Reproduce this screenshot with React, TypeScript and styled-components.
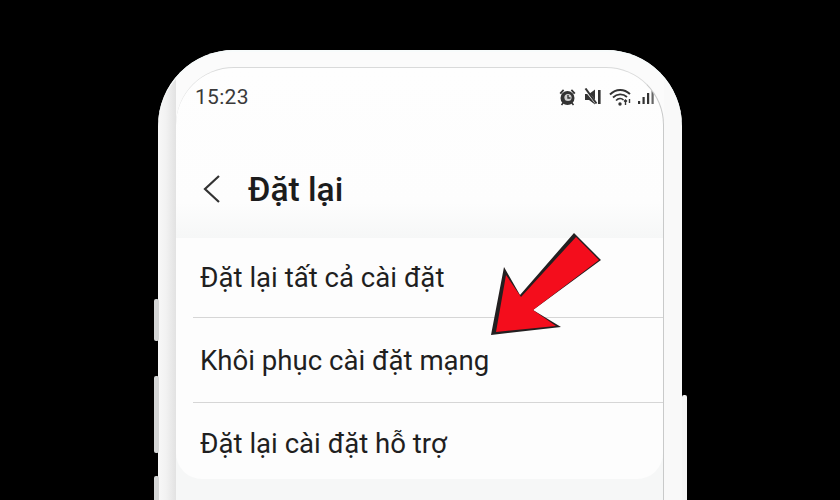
import styled, { createGlobalStyle } from 'styled-components';

const GlobalStyle = createGlobalStyle`
  html, body {
    margin: 0;
    padding: 0;
    background: #000;
    overflow: hidden;
  }
`;

const Page = styled.div`
  position: relative;
  width: 840px;
  height: 500px;
  padding: 50px 158px 0;
  box-sizing: border-box;
  background: #000;
  overflow: hidden;
  font-family: Roboto, "Noto Sans", sans-serif;
`;

const Phone = styled.div`
  position: relative;
  height: 520px;
  padding: 17px 18px 0;
  box-sizing: border-box;
  border-radius: 76px 76px 0 0;
  background: linear-gradient(90deg, #f8f8f8 0, #f2f2f2 8px, #e2e2e2 18px, #fbfbfb 18px, #fbfbfb 506px, #f9f9f9 506px);
  box-shadow: inset 0 2px 0 #f7fbfb;
`;

const SideKey = styled.div<{ $side: 'left' | 'right'; $top: number; $height: number }>`
  position: absolute;
  ${(p) => (p.$side === 'left' ? 'left: -4px;' : 'right: -5px;')}
  top: ${(p) => p.$top}px;
  width: 5px;
  height: ${(p) => p.$height}px;
  border-radius: 2px;
  background: ${(p) => (p.$side === 'left' ? '#d5d6d6' : '#f6f6f6')};
`;

const Screen = styled.div`
  height: 500px;
  border-radius: 58px 58px 0 0;
  border-top: 1px solid #d9dada;
  border-right: 1px solid #c9caca;
  box-sizing: border-box;
  overflow: hidden;
  background: linear-gradient(180deg, #fefefe 0, #fdfdfd 135px, #f6f7f7 170px);
`;

const StatusBar = styled.div`
  display: flex;
  align-items: center;
  justify-content: space-between;
  height: 26px;
  padding: 16px 9px 0 19px;
`;

const Clock = styled.span`
  font-size: 21px;
  letter-spacing: 0.3px;
  color: #3a3a3a;
`;

const StatusIcons = styled.div`
  display: flex;
  align-items: center;
`;

const Header = styled.div`
  display: flex;
  align-items: center;
  gap: 27px;
  height: 95px;
  padding: 63px 0 0 26px;
  box-sizing: border-box;
`;

const Title = styled.h1`
  margin: 0;
  font-size: 33.6px;
  font-weight: 500;
  color: #1c1c1c;
`;

const List = styled.div`
  margin-top: 33px;
  padding: 0 0 0 17px;
  height: 241px;
  background: #fdfdfd;
  border-radius: 0 0 26px 26px;
`;

const Row = styled.div<{ $height: number; $last?: boolean }>`
  display: flex;
  align-items: center;
  height: ${(p) => p.$height}px;
  font-size: 27.6px;
  color: #1f1f1f;
  box-sizing: border-box;
  padding-left: 7px;
  border-bottom: ${(p) => (p.$last ? 'none' : '1px solid #d6d6d6')};
`;

const Arrow = styled.svg`
  position: absolute;
  left: 0;
  top: 0;
`;

function AlarmIcon() {
  return (
    <svg width="17" height="18" viewBox="0 0 17 18" fill="#333">
      <circle cx="8.5" cy="10" r="7" />
      <path d="M0.5 5 L4 1.2 L5.2 2.4 L2 6.2 Z M16.5 5 L13 1.2 L11.8 2.4 L15 6.2 Z" />
      <path d="M2.5 17 L4.5 14.5 M14.5 17 L12.5 14.5" stroke="#333" strokeWidth="1.6" />
      <circle cx="9" cy="9.5" r="3.6" fill="#cfcfcf" />
      <path d="M9 7 V10 H11.5" stroke="#333" strokeWidth="1.4" fill="none" />
    </svg>
  );
}

function MuteIcon() {
  return (
    <svg width="18" height="18" viewBox="0 0 18 18" fill="#333" style={{ marginLeft: 8 }}>
      <path d="M1 6 H5 L11 1.5 V16.5 L5 12 H1 Z" />
      <path d="M0 0 L12 15" stroke="#fbfbfb" strokeWidth="2.4" />
      <path d="M1.5 0.5 L12.5 15.5" stroke="#333" strokeWidth="2" />
      <rect x="14" y="2" width="2.6" height="14" />
    </svg>
  );
}

function WifiIcon() {
  return (
    <svg width="24" height="18" viewBox="0 0 24 18" fill="none" stroke="#333" style={{ marginLeft: 7 }}>
      <path d="M1 6.5 C7 0.5 15 0.5 21 6" strokeWidth="1.9" />
      <path d="M4 9.5 C8 5.5 14 5.5 18 9" strokeWidth="1.8" />
      <path d="M7 12.5 C9.5 10 12.5 10 14.5 12" strokeWidth="1.7" />
      <circle cx="11" cy="16" r="1.7" fill="#333" stroke="none" />
      <path d="M16.5 12 V17 M15 13.5 L16.5 12 L18 13.5 M20.5 11 V15" strokeWidth="1.4" />
    </svg>
  );
}

function SignalIcon() {
  return (
    <svg width="16" height="16" viewBox="0 0 16 16" fill="#333" style={{ marginLeft: 5 }}>
      <rect x="0" y="12" width="2.2" height="3" />
      <rect x="4.5" y="8" width="2.2" height="7" />
      <rect x="9" y="4" width="2.2" height="11" />
      <rect x="13.5" y="1" width="2.2" height="14" fill="#666" />
    </svg>
  );
}

function BackIcon() {
  return (
    <svg width="19" height="30" viewBox="0 0 19 30" fill="none" stroke="#333" strokeWidth="2.2">
      <path d="M17 2 L3 15 L17 28" />
    </svg>
  );
}

export default function App() {
  return (
    <Page>
      <GlobalStyle />
      <Phone>
        <SideKey $side="left" $top={249} $height={42} />
        <SideKey $side="left" $top={326} $height={77} />
        <SideKey $side="left" $top={426} $height={40} />
        <SideKey $side="right" $top={345} $height={120} />
        <Screen>
          <StatusBar>
            <Clock>15:23</Clock>
            <StatusIcons>
              <AlarmIcon />
              <MuteIcon />
              <WifiIcon />
              <SignalIcon />
            </StatusIcons>
          </StatusBar>
          <Header>
            <BackIcon />
            <Title>Đặt lại</Title>
          </Header>
          <List>
            <Row $height={80}>Đặt lại tất cả cài đặt</Row>
            <Row $height={85}>Khôi phục cài đặt mạng</Row>
            <Row $height={80} $last>Đặt lại cài đặt hỗ trợ</Row>
          </List>
        </Screen>
      </Phone>
      <Arrow width="840" height="500" viewBox="0 0 840 500">
        <polygon points="491,335 504,267 520,295 574,233 601,260 533,310 561,327" fill="#231f20" />
        <polygon points="496,332 506,275 521,297 576,237 599,260 533,310 556,326" fill="#f40d1c" />
      </Arrow>
    </Page>
  );
}
